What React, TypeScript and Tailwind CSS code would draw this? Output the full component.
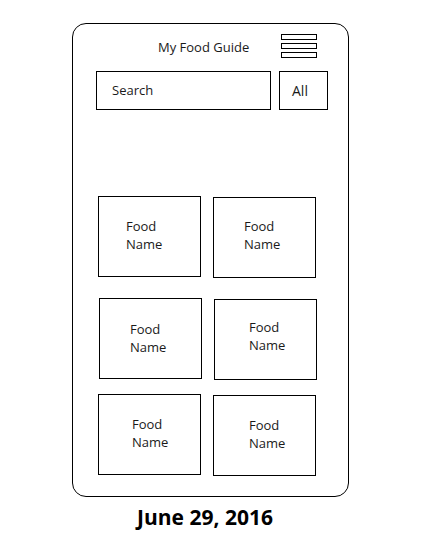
import React from "react";

const font = { fontFamily: '"Open Sans", "Noto Sans", sans-serif' };

function Card({ ml, mt, tx, ty }: { ml: string; mt: string; tx: string; ty: string }) {
  return (
    <div className={`w-[103px] h-[81px] border border-black ${ml} ${mt}`}>
      <div className={`text-[13px] leading-[18px] text-[#1a1a1a] ${tx} ${ty}`}>
        Food
        <br />
        Name
      </div>
    </div>
  );
}

export default function App() {
  return (
    <div className="w-[421px] h-[538px] bg-white flex flex-col" style={font}>
      <div className="ml-[72px] mt-[23px] w-[277px] h-[474px] border border-black rounded-[14px] flex flex-col">
        <div className="flex items-start mt-[10px]">
          <div className="ml-[85px] mt-[4px] text-[13px] leading-[18px] text-[#1a1a1a]">My Food Guide</div>
          <div className="ml-auto mr-[31px] flex flex-col gap-[3px]">
            <div className="w-[36px] h-[6px] border-[1.5px] border-black" />
            <div className="w-[36px] h-[6px] border-[1.5px] border-black" />
            <div className="w-[36px] h-[6px] border-[1.5px] border-black" />
          </div>
        </div>
        <div className="flex mt-[13px] ml-[23px]">
          <div className="w-[175px] h-[39px] border border-black flex items-center pl-[15px] text-[13px] text-[#1a1a1a]">
            Search
          </div>
          <div className="ml-[8px] w-[49px] h-[39px] border border-black flex items-center pl-[12px] text-[14px] font-medium text-[#1a1a1a]">
            All
          </div>
        </div>
        <div className="flex items-start mt-[86px] ml-[25px]">
          <Card ml="ml-0" mt="mt-0" tx="ml-[27px]" ty="mt-[20px]" />
          <Card ml="ml-[12px]" mt="mt-[1px]" tx="ml-[30px]" ty="mt-[19px]" />
        </div>
        <div className="flex items-start mt-[20px] ml-[26px]">
          <Card ml="ml-0" mt="mt-0" tx="ml-[30px]" ty="mt-[21px]" />
          <Card ml="ml-[12px]" mt="mt-[1px]" tx="ml-[34px]" ty="mt-[18px]" />
        </div>
        <div className="flex items-start mt-[14px] ml-[25px]">
          <Card ml="ml-0" mt="mt-0" tx="ml-[33px]" ty="mt-[20px]" />
          <Card ml="ml-[12px]" mt="mt-[1px]" tx="ml-[35px]" ty="mt-[20px]" />
        </div>
      </div>
      <div className="ml-[137px] mt-[8px] text-[21px] leading-[24px] font-bold text-black">June 29, 2016</div>
    </div>
  );
}
